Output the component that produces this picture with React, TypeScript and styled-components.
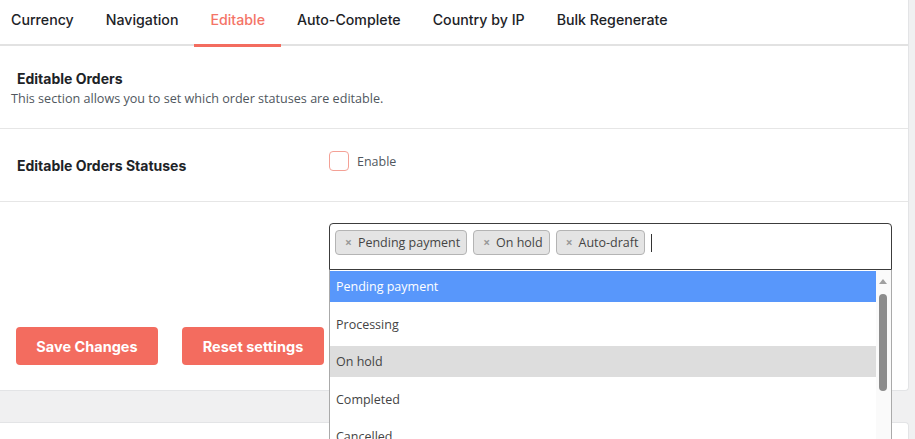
import React from 'react';
import styled, { createGlobalStyle } from 'styled-components';

const Global = createGlobalStyle`
  html, body { margin: 0; padding: 0; background: #f0f0f1; }
  body { width: 915px; height: 439px; overflow: hidden; font-family: Inter, "Noto Sans", sans-serif; }
  * { box-sizing: border-box; }
`;

const Page = styled.div`
  width: 909px;
`;

const Card = styled.div`
  background: #fff;
  border-right: 1px solid #e3e4e6;
  border-bottom: 1px solid #e3e4e6;
  border-bottom-right-radius: 4px;
`;

const NextCard = styled.div`
  margin-top: 31px;
  height: 40px;
  background: #fff;
  border-top: 1px solid #e3e4e6;
  border-right: 1px solid #e3e4e6;
  border-top-right-radius: 4px;
`;

const TabBar = styled.nav`
  display: flex;
  height: 46px;
  border-bottom: 2px solid #e2e2e2;
`;

const Tab = styled.div<{ $active?: boolean }>`
  height: 47px;
  padding: 0 16px 5px;
  display: flex;
  align-items: center;
  font-size: 14.2px;
  font-weight: 500;
  color: ${p => (p.$active ? '#f47467' : '#1d2327')};
  border-bottom: 3px solid ${p => (p.$active ? '#f36c5f' : 'transparent')};
  &:first-child { padding-left: 11px; }
`;

const Intro = styled.section`
  padding: 24px 0 20px 0;
  border-bottom: 1px solid #e6e6e6;
`;

const Heading = styled.h2`
  margin: 0 0 3px 17px;
  font-size: 14px;
  line-height: 17px;
  font-weight: 700;
  color: #1d2327;
`;

const Description = styled.p`
  margin: 0 0 0 11px;
  font-family: "Open Sans", "Noto Sans", sans-serif;
  font-size: 12.6px;
  line-height: 18px;
  color: #50575e;
`;

const Row = styled.div<{ $top: number; $height?: number; $border?: boolean }>`
  display: grid;
  grid-template-columns: 312px 563px;
  align-items: start;
  padding-left: 17px;
  padding-top: ${p => p.$top}px;
  ${p => (p.$height ? `height: ${p.$height}px;` : '')}
  ${p => (p.$border ? 'border-bottom: 1px solid #e6e6e6;' : '')}
`;

const Label = styled.div`
  padding-top: 6px;
  font-size: 14px;
  line-height: 17px;
  font-weight: 700;
  color: #1d2327;
`;

const CheckLine = styled.label`
  display: flex;
  align-items: center;
  gap: 8px;
  font-family: "Open Sans", "Noto Sans", sans-serif;
  font-size: 12.5px;
  color: #50575e;
`;

const Box = styled.span`
  width: 20px;
  height: 20px;
  border: 1px solid #f4a196;
  border-radius: 4px;
  background: #fff;
`;

const SelectWrap = styled.div`
  position: relative;
`;

const SelectBox = styled.div`
  height: 47px;
  border: 1px solid #3c3c3c;
  border-radius: 4px 4px 0 0;
  padding: 6px 5px;
  display: flex;
  align-items: flex-start;
  gap: 6px;
  font-family: "Open Sans", "Noto Sans", sans-serif;
`;

const Tag = styled.span`
  height: 25px;
  display: inline-flex;
  align-items: center;
  gap: 6px;
  padding: 0 6px 0 9px;
  background: #e4e4e4;
  border: 1px solid #b4b4b4;
  border-radius: 4px;
  font-size: 12.5px;
  color: #444;
`;

const Remove = styled.span`
  font-size: 12px;
  color: #999;
  font-weight: 700;
`;

const Caret = styled.span`
  width: 1px;
  height: 18px;
  margin-top: 4px;
  background: #333;
`;

const Dropdown = styled.div`
  position: absolute;
  top: 47px;
  left: 0;
  width: 563px;
  height: 200px;
  display: flex;
  border-left: 1px solid #aaa;
  border-right: 1px solid #aaa;
  background: #fff;
  font-family: "Open Sans", "Noto Sans", sans-serif;
  z-index: 5;
`;

const Options = styled.ul`
  flex: 1;
  list-style: none;
  margin: 0;
  padding: 1px 0 0;
`;

const Option = styled.li<{ $state?: 'active' | 'selected' }>`
  height: 31px;
  margin-bottom: 6.5px;
  display: flex;
  align-items: center;
  padding-left: 6px;
  font-size: 12.5px;
  color: ${p => (p.$state === 'active' ? '#fff' : '#444')};
  background: ${p => (p.$state === 'active' ? '#5897fb' : p.$state === 'selected' ? '#ddd' : 'transparent')};
`;

const ScrollTrack = styled.div`
  width: 15px;
  background: #fafafa;
  position: relative;
`;

const UpArrow = styled.span`
  position: absolute;
  left: 3px;
  top: 9px;
  width: 0;
  height: 0;
  border-left: 4.5px solid transparent;
  border-right: 4.5px solid transparent;
  border-bottom: 5px solid #a0a0a0;
`;

const Thumb = styled.span`
  position: absolute;
  left: 3px;
  top: 24px;
  width: 8px;
  height: 97px;
  border-radius: 4px;
  background: #8c8c8c;
`;

const Footer = styled.div`
  display: flex;
  gap: 24px;
  padding: 57px 0 25px 16px;
`;

const Button = styled.button`
  width: 142px;
  height: 38px;
  border: none;
  border-radius: 4px;
  background: #f36c5f;
  color: #fff;
  font-family: Inter, "Noto Sans", sans-serif;
  font-size: 14.5px;
  font-weight: 700;
`;

const tabs = ['Currency', 'Navigation', 'Editable', 'Auto-Complete', 'Country by IP', 'Bulk Regenerate'];
const tags = ['Pending payment', 'On hold', 'Auto-draft'];
const options: { label: string; state?: 'active' | 'selected' }[] = [
  { label: 'Pending payment', state: 'active' },
  { label: 'Processing' },
  { label: 'On hold', state: 'selected' },
  { label: 'Completed' },
  { label: 'Cancelled' },
  { label: 'Refunded' },
];

export default function App() {
  return (
    <Page>
      <Global />
      <Card>
        <TabBar>
          {tabs.map(t => (
            <Tab key={t} $active={t === 'Editable'}>{t}</Tab>
          ))}
        </TabBar>
        <Intro>
          <Heading>Editable Orders</Heading>
          <Description>This section allows you to set which order statuses are editable.</Description>
        </Intro>
        <Row $top={22} $height={73} $border>
          <Label>Editable Orders Statuses</Label>
          <CheckLine>
            <Box />
            Enable
          </CheckLine>
        </Row>
        <Row $top={21}>
          <div />
          <SelectWrap>
            <SelectBox>
              {tags.map(t => (
                <Tag key={t}>
                  <Remove>×</Remove>
                  {t}
                </Tag>
              ))}
              <Caret />
            </SelectBox>
            <Dropdown>
              <Options>
                {options.map(o => (
                  <Option key={o.label} $state={o.state}>{o.label}</Option>
                ))}
              </Options>
              <ScrollTrack>
                <UpArrow />
                <Thumb />
              </ScrollTrack>
            </Dropdown>
          </SelectWrap>
        </Row>
        <Footer>
          <Button>Save Changes</Button>
          <Button>Reset settings</Button>
        </Footer>
      </Card>
      <NextCard />
    </Page>
  );
}
